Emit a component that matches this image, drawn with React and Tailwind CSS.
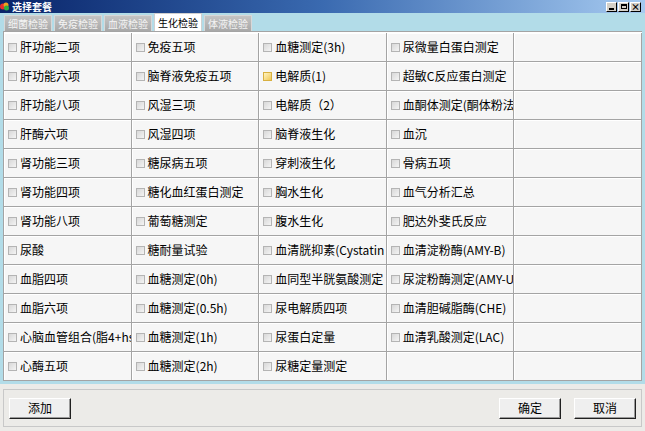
import React from 'react'

const COLS = [
  ['肝功能二项', '肝功能六项', '肝功能八项', '肝酶六项', '肾功能三项', '肾功能四项', '肾功能八项', '尿酸', '血脂四项', '血脂六项', '心脑血管组合(脂4+hs-CRP)', '心酶五项'],
  ['免疫五项', '脑脊液免疫五项', '风湿三项', '风湿四项', '糖尿病五项', '糖化血红蛋白测定', '葡萄糖测定', '糖耐量试验', '血糖测定(0h)', '血糖测定(0.5h)', '血糖测定(1h)', '血糖测定(2h)'],
  ['血糖测定(3h)', '电解质(1)', '电解质（2）', '脑脊液生化', '穿刺液生化', '胸水生化', '腹水生化', '血清胱抑素(Cystatin C)', '血同型半胱氨酸测定', '尿电解质四项', '尿蛋白定量', '尿糖定量测定'],
  ['尿微量白蛋白测定', '超敏C反应蛋白测定', '血酮体测定(酮体粉法)', '血沉', '骨病五项', '血气分析汇总', '肥达外斐氏反应', '血清淀粉酶(AMY-B)', '尿淀粉酶测定(AMY-U)', '血清胆碱脂酶(CHE)', '血清乳酸测定(LAC)', null],
]

const TABS = ['细菌检验', '免疫检验', '血液检验', '生化检验', '体液检验']

function Check({ hot }) {
  return (
    <span
      className={
        'w-[9px] h-[9px] shrink-0 border ' +
        (hot
          ? 'border-[#d8b040] bg-gradient-to-br from-[#fff4c0] to-[#f0c850]'
          : 'border-[#b4b4b4] bg-gradient-to-br from-[#d8d8d8] to-[#f4f4f4]')
      }
    />
  )
}

function Cell({ label, hot }) {
  return (
    <div className="h-[29px] min-w-0 flex items-center gap-[3px] pl-[4px] pr-[2px] overflow-hidden whitespace-nowrap border-r border-b border-[#a4a4a4] bg-[#f6f6f6] shadow-[inset_1px_1px_0_#ffffff]">
      {label && <Check hot={hot} />}
      {label && <span className="text-[12px] leading-none text-black">{label}</span>}
    </div>
  )
}

function WinButton({ children }) {
  return (
    <button className="w-[62px] h-[21px] text-[12px] text-black bg-[#efefef] border border-t-white border-l-white border-r-[#202020] border-b-[#202020] shadow-[inset_-1px_-1px_0_#9a9a9a]">
      {children}
    </button>
  )
}

export default function App() {
  const cells = []
  for (let r = 0; r < 12; r++) {
    for (let c = 0; c < 5; c++) {
      const label = c < 4 ? COLS[c][r] : null
      cells.push(<Cell key={r + '-' + c} label={label} hot={r === 1 && c === 2} />)
    }
  }

  return (
    <div
      className="w-[645px] h-[431px] bg-[#ecebe8] flex flex-col overflow-hidden"
      style={{ fontFamily: '"Noto Sans CJK SC", "Liberation Sans", sans-serif' }}
    >
      {/* title bar */}
      <div className="h-[13px] flex items-center justify-between bg-gradient-to-r from-[#0a246a] via-[#3a6ab0] to-[#a6caf0]">
        <div className="flex items-center gap-[2px]">
          <svg width="10" height="9" viewBox="0 0 10 9">
            <circle cx="3" cy="4.5" r="3" fill="#e83030" />
            <circle cx="6" cy="3" r="2.5" fill="#f0a020" />
            <circle cx="6.5" cy="6" r="2.5" fill="#30b040" />
          </svg>
          <span className="text-[10px] leading-[12px] font-bold text-white">选择套餐</span>
        </div>
        <div className="flex items-center gap-px pr-[4px]">
          <span className="w-[11px] h-[10px] bg-[#d4d0c8] border border-t-white border-l-white border-r-black border-b-black flex items-end justify-center pb-px">
            <span className="w-[5px] h-[2px] bg-black" />
          </span>
          <span className="w-[11px] h-[10px] bg-[#d4d0c8] border border-t-white border-l-white border-r-black border-b-black flex items-center justify-center">
            <span className="w-[6px] h-[5px] border border-black border-t-2" />
          </span>
          <span className="w-[11px] h-[10px] bg-[#d4d0c8] border border-t-white border-l-white border-r-black border-b-black flex items-center justify-center text-[9px] leading-none font-bold text-black">
            ×
          </span>
        </div>
      </div>

      {/* tab strip */}
      <div className="h-[18px] bg-[#b2dce8] flex items-end px-[4px] gap-[2px]">
        {TABS.map((t, i) =>
          i === 3 ? (
            <div key={t} className="w-[48px] h-[18px] bg-white flex items-center justify-center text-[10px] leading-none text-black border-t border-x border-[#d0d0d0]">
              {t}
            </div>
          ) : (
            <div
              key={t}
              className="w-[48px] h-[16px] bg-gradient-to-b from-[#c4c4c4] to-[#a8a8a8] flex items-center justify-center text-[10px] leading-none text-[#f4f4f4] border-t border-x border-[#d8d8d8]"
            >
              {t}
            </div>
          )
        )}
      </div>

      {/* grid panel */}
      <div className="border-x-[3px] border-b-[3px] border-[#b2dce8] bg-white">
        <div className="border-t border-l border-[#a4a4a4] grid grid-cols-5 pt-px">{cells}</div>
      </div>

      {/* bottom bar */}
      <div className="flex-1 px-[3px] pt-[5px] pb-[4px]">
        <div className="h-full border border-[#c8c8c8] flex items-center justify-between px-[5px]">
          <WinButton>添加</WinButton>
          <div className="flex gap-[13px]">
            <WinButton>确定</WinButton>
            <WinButton>取消</WinButton>
          </div>
        </div>
      </div>
    </div>
  )
}
